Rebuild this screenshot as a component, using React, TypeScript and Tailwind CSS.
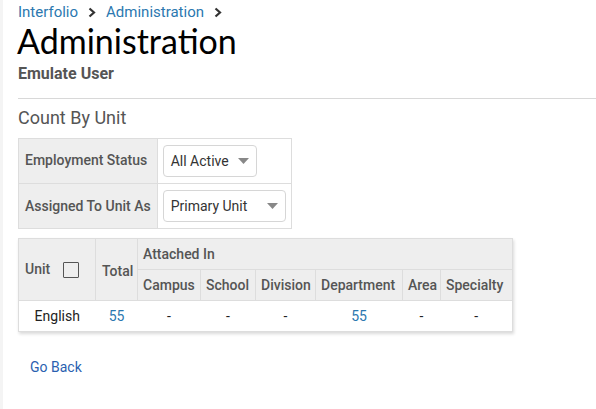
import React from 'react';

const Caret = () => (
  <svg width="11" height="6" viewBox="0 0 11 6" className="shrink-0">
    <path d="M0 0 L11 0 L5.5 6 Z" fill="#888" />
  </svg>
);

const Chevron = () => (
  <svg width="8" height="11" viewBox="0 0 8 11" className="mx-[10px]">
    <path d="M1.5 1.5 L6 5.5 L1.5 9.5" fill="none" stroke="#333" strokeWidth="2.2" />
  </svg>
);

const SelectBox: React.FC<{ label: string; width: string }> = ({ label, width }) => (
  <div className={`${width} h-[32px] flex items-center justify-between pl-[7px] pr-[7px] border border-[#d6d6d6] rounded-[4px] bg-white text-[14px] text-[#333]`}>
    <span>{label}</span>
    <Caret />
  </div>
);

const cols = ['Campus', 'School', 'Division', 'Department', 'Area', 'Specialty'];
const row = ['-', '-', '-', '55', '-', '-'];

const App: React.FC = () => {
  return (
    <div className="flex min-h-[409px] w-[596px] bg-white" style={{ fontFamily: 'Roboto, "Liberation Sans", sans-serif' }}>
      <div className="w-[3px] shrink-0 bg-[#f4f4f4]" />
      <div className="flex-1 pl-[15px] pt-[2px]">
        <nav className="flex items-center h-[20px] text-[15px] leading-[18px] text-[#2b78b0]">
          <span>Interfolio</span>
          <Chevron />
          <span>Administration</span>
          <Chevron />
        </nav>
        <h1 className="mt-[3px] text-[34px] leading-[32px] text-black -ml-[1px]" style={{ fontFamily: 'Lato, "Open Sans", sans-serif' }}>
          Administration
        </h1>
        <p className="mt-[5px] text-[16px] leading-[24px] font-bold text-[#555]">Emulate User</p>
        <div className="mt-[12px] h-px bg-[#d8d8d8]" />

        <h2 className="mt-[5px] text-[18px] leading-[28px] text-[#555]">Count By Unit</h2>

        <table className="mt-[6px] border-collapse border border-[#ddd] text-[14px]">
          <tbody>
            <tr className="h-[45px]">
              <td className="w-[123px] bg-[#eee] border border-[#ddd] px-[6px] font-medium text-[#555] align-top pt-[11px] whitespace-nowrap">Employment Status</td>
              <td className="w-[126px] border border-[#ddd] px-[5px]">
                <SelectBox label="All Active" width="w-[94px]" />
              </td>
            </tr>
            <tr className="h-[45px]">
              <td className="bg-[#eee] border border-[#ddd] px-[6px] font-medium text-[#555] whitespace-nowrap">Assigned To Unit As</td>
              <td className="border border-[#ddd] px-[5px]">
                <SelectBox label="Primary Unit" width="w-[123px]" />
              </td>
            </tr>
          </tbody>
        </table>

        <table className="mt-[9px] border-collapse text-[14px] shadow-[1px_2px_3px_rgba(0,0,0,0.15)] table-fixed w-[494px]">
          <colgroup>
            <col className="w-[77px]" />
            <col className="w-[42px]" />
            <col className="w-[63px]" />
            <col className="w-[55px]" />
            <col className="w-[60px]" />
            <col className="w-[87px]" />
            <col className="w-[38px]" />
            <col className="w-[72px]" />
          </colgroup>
          <thead className="bg-[#eee] text-[#555] font-medium">
            <tr className="h-[31px]">
              <th rowSpan={2} className="border border-[#ddd] px-[6px] text-left font-medium">
                <div className="flex items-center">
                  <span>Unit</span>
                  <span className="ml-[13px] w-[16px] h-[16px] border border-[#555] rounded-[1px]" />
                </div>
              </th>
              <th rowSpan={2} className="border border-[#ddd] px-[6px] text-left font-medium pt-[3px]">Total</th>
              <th colSpan={6} className="border border-[#ddd] px-[5px] text-left font-medium">Attached In</th>
            </tr>
            <tr className="h-[31px]">
              {cols.map(c => (
                <th key={c} className="border border-[#ddd] px-[5px] text-left font-medium whitespace-nowrap">{c}</th>
              ))}
            </tr>
          </thead>
          <tbody className="bg-white">
            <tr className="h-[31px]">
              <td className="border-y border-l border-[#ddd] text-center text-[#222]">English</td>
              <td className="border-y border-[#ddd] text-center text-[#2b78b0]">55</td>
              {row.map((v, i) => (
                <td key={i} className={`border-y border-[#ddd] text-center ${v === '55' ? 'text-[#2b78b0]' : 'text-[#222]'} ${i === 5 ? 'border-r' : ''}`}>{v}</td>
              ))}
            </tr>
          </tbody>
        </table>

        <a className="block mt-[25px] ml-[12px] text-[14px] text-[#2b5fb0]" href="#">Go Back</a>
      </div>
    </div>
  );
};

export default App;
